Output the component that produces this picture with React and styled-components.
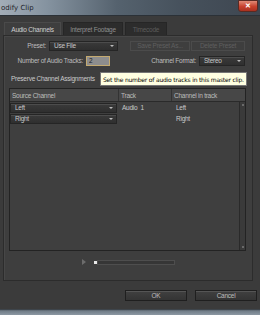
import styled, { createGlobalStyle } from "styled-components";

const Global = createGlobalStyle`
  html, body {
    margin: 0;
    padding: 0;
    background: #3b3b3b;
  }
  body {
    font-family: "Liberation Sans", Arial, sans-serif;
    font-size: 6.5px;
    letter-spacing: -0.25px;
    color: #c4c4c4;
  }
`;

const Window = styled.div`
  width: 260px;
  height: 315px;
  display: flex;
  flex-direction: column;
  overflow: hidden;
  background: #3b3b3b;
`;

const TitleBar = styled.div`
  height: 16px;
  flex-shrink: 0;
  display: flex;
  align-items: center;
  justify-content: space-between;
  padding: 0 2px 0 1px;
  background: linear-gradient(90deg, #a3adb7 0%, #8593a0 18%, #55626e 45%, #46515c 70%, #3e4650 100%);
  border-bottom: 1px solid #2b3137;
  box-sizing: border-box;
`;

const Title = styled.span`
  font-family: "DejaVu Sans", sans-serif;
  font-size: 7px;
  letter-spacing: 0;
  color: #1e2328;
`;

const CloseBtn = styled.div`
  width: 18px;
  height: 10px;
  margin-top: -3px;
  border-radius: 0 0 3px 3px;
  background: linear-gradient(180deg, #e08a76 0%, #c8412d 55%, #a8301f 100%);
  border: 1px solid #5a2a22;
  color: #fff;
  font-size: 7px;
  font-weight: bold;
  display: flex;
  align-items: center;
  justify-content: center;
`;

const Body = styled.div`
  flex: 1;
  display: flex;
  flex-direction: column;
  padding: 6px 7px 0 3px;
`;

const Tabs = styled.div`
  display: flex;
  gap: 2px;
  padding-left: 1px;
  height: 13px;
`;

const Tab = styled.div`
  display: flex;
  align-items: center;
  justify-content: center;
  white-space: nowrap;
  background: ${(p) => (p.$active ? "#3e3e3e" : "#2c2c2c")};
  color: ${(p) => (p.$disabled ? "#5c5c5c" : p.$active ? "#cfcfcf" : "#8e8e8e")};
  border: 1px solid ${(p) => (p.$active ? "#4a4a4a" : "#262626")};
  border-bottom: none;
  width: ${(p) => p.$w}px;
  box-sizing: border-box;
`;

const Panel = styled.div`
  height: 246px;
  display: flex;
  flex-direction: column;
  border: 1px solid #2c2c2c;
  box-shadow: inset 1px 1px 0 #474747;
  background: #3e3e3e;
  padding: 4px 0 0 5px;
  box-sizing: border-box;
`;

const Row = styled.div`
  display: flex;
  align-items: center;
  height: 11px;
  margin-bottom: ${(p) => p.$mb || 0}px;
  position: relative;
`;

const Label = styled.span`
  width: ${(p) => p.$w}px;
  flex-shrink: 0;
  text-align: right;
  padding-right: 3px;
  box-sizing: border-box;
  color: #bdbdbd;
  white-space: nowrap;
`;

const Select = styled.div`
  width: ${(p) => p.$w}px;
  height: 10px;
  flex-shrink: 0;
  box-sizing: border-box;
  display: flex;
  align-items: center;
  justify-content: space-between;
  padding: 0 3px 0 4px;
  background: linear-gradient(180deg, #3a3a3a, #2f2f2f);
  border: 1px solid #252525;
  box-shadow: inset 0 1px 0 #4c4c4c;
  color: #c8c8c8;
`;

const Arrow = styled.span`
  width: 0;
  height: 0;
  border-left: 2px solid transparent;
  border-right: 2px solid transparent;
  border-top: 2px solid #bbb;
`;

const GhostButton = styled.div`
  width: ${(p) => p.$w}px;
  height: 10px;
  flex-shrink: 0;
  margin-left: ${(p) => p.$ml}px;
  box-sizing: border-box;
  border: 1px solid #4b4b4b;
  color: #5e5e5e;
  display: flex;
  align-items: center;
  justify-content: center;
  white-space: nowrap;
`;

const NumberInput = styled.div`
  width: 24px;
  height: 10px;
  flex-shrink: 0;
  box-sizing: border-box;
  background: #8d8d8d;
  border: 1px solid #c4aa70;
  color: #202020;
  padding-left: 2px;
  display: flex;
  align-items: center;
`;

const Tooltip = styled.div`
  position: absolute;
  left: 91px;
  top: -1px;
  height: 12px;
  padding: 0 2px;
  display: flex;
  align-items: center;
  background: #ffffe1;
  border: 1px solid #767676;
  color: #000;
  font-family: "DejaVu Sans", sans-serif;
  font-size: 6px;
  white-space: nowrap;
  letter-spacing: -0.2px;
`;

const Table = styled.div`
  margin-top: 4px;
  width: 237px;
  height: 163px;
  box-sizing: border-box;
  border: 1px solid #232323;
  background: #3f3f3f;
  display: flex;
  flex-direction: column;
  position: relative;
`;

const HeaderRow = styled.div`
  display: grid;
  grid-template-columns: 109px 53px 1fr;
  height: 12px;
  background: #474747;
  border-bottom: 1px solid #2a2a2a;
`;

const HeaderCell = styled.div`
  display: flex;
  align-items: center;
  padding-left: 2px;
  color: #bdbdbd;
  border-right: ${(p) => (p.$last ? "none" : "1px solid #333")};
`;

const BodyRow = styled.div`
  display: grid;
  grid-template-columns: 109px 53px 1fr;
  height: 11px;
  align-items: center;
`;

const Cell = styled.div`
  padding-left: ${(p) => p.$pl || 2}px;
  color: #cacaca;
  white-space: nowrap;
`;

const ScrollBar = styled.div`
  position: absolute;
  right: 0;
  top: 13px;
  bottom: 0;
  width: 6px;
  border-left: 1px solid #2a2a2a;
  background: #3a3a3a;
  display: flex;
  flex-direction: column;
  justify-content: space-between;
  align-items: center;
  padding: 2px 0;
  box-sizing: border-box;
`;

const ScrollArrow = styled.span`
  width: 2px;
  height: 2px;
  background: #6a6a6a;
`;

const SliderRow = styled.div`
  display: flex;
  align-items: center;
  margin: 7px 0 0 73px;
  height: 8px;
`;

const Play = styled.span`
  width: 0;
  height: 0;
  border-top: 3px solid transparent;
  border-bottom: 3px solid transparent;
  border-left: 4px solid #6c6c6c;
  margin-right: 8px;
`;

const Thumb = styled.span`
  width: 3px;
  height: 3px;
  background: #e8e8e8;
`;

const Track = styled.span`
  width: 76px;
  height: 3px;
  border: 1px solid #4e4e4e;
  background: #363636;
`;

const Footer = styled.div`
  display: flex;
  justify-content: flex-end;
  gap: 8px;
  padding: 9px 0 0 0;
  margin-right: -4px;
`;

const Button = styled.div`
  width: 62px;
  height: 11px;
  box-sizing: border-box;
  display: flex;
  align-items: center;
  justify-content: center;
  background: linear-gradient(180deg, #404040, #343434);
  border: 1px solid #1f1f1f;
  box-shadow: inset 0 1px 0 #555;
  color: #bdbdbd;
`;

const BottomFrame = styled.div`
  height: 6px;
  flex-shrink: 0;
  background: linear-gradient(180deg, #2b3035 0%, #6f7b86 30%, #8c98a3 100%);
`;

export default function App() {
  return (
    <Window>
      <Global />
      <TitleBar>
        <Title>odify Clip</Title>
        <CloseBtn>✕</CloseBtn>
      </TitleBar>
      <Body>
        <Tabs>
          <Tab $active $w={57}>Audio Channels</Tab>
          <Tab $w={60}>Interpret Footage</Tab>
          <Tab $disabled $w={42}>Timecode</Tab>
        </Tabs>
        <Panel>
          <Row $mb={4}>
            <Label $w={40}>Preset:</Label>
            <Select $w={69}>
              Use File <Arrow />
            </Select>
            <GhostButton $w={60} $ml={12}>Save Preset As...</GhostButton>
            <GhostButton $w={54} $ml={1}>Delete Preset</GhostButton>
          </Row>
          <Row $mb={7}>
            <Label $w={77}>Number of Audio Tracks:</Label>
            <NumberInput>2</NumberInput>
            <Label $w={89}>Channel Format:</Label>
            <Select $w={46}>
              Stereo <Arrow />
            </Select>
          </Row>
          <Row>
            <Cell $pl={0}>Preserve Channel Assignments</Cell>
            <Tooltip>Set the number of audio tracks in this master clip.</Tooltip>
          </Row>
          <Table>
            <HeaderRow>
              <HeaderCell>Source Channel</HeaderCell>
              <HeaderCell>Track</HeaderCell>
              <HeaderCell $last>Channel in track</HeaderCell>
            </HeaderRow>
            <BodyRow>
              <Select $w={107}>
                Left <Arrow />
              </Select>
              <Cell $pl={3}>Audio&nbsp;&nbsp;1</Cell>
              <Cell $pl={4}>Left</Cell>
            </BodyRow>
            <BodyRow>
              <Select $w={107}>
                Right <Arrow />
              </Select>
              <Cell />
              <Cell $pl={4}>Right</Cell>
            </BodyRow>
            <ScrollBar>
              <ScrollArrow />
              <ScrollArrow />
            </ScrollBar>
          </Table>
          <SliderRow>
            <Play />
            <Thumb />
            <Track />
          </SliderRow>
        </Panel>
        <Footer>
          <Button>OK</Button>
          <Button>Cancel</Button>
        </Footer>
      </Body>
      <BottomFrame />
    </Window>
  );
}
